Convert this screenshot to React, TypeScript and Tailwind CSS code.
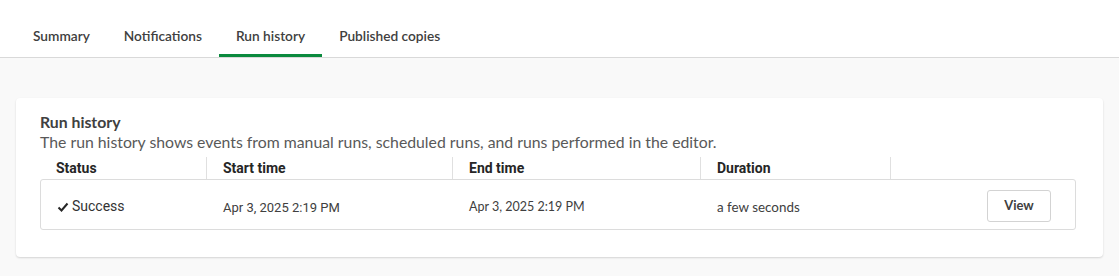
import React from "react";

const tabs = ["Summary", "Notifications", "Run history", "Published copies"];

export default function App() {
  return (
    <div className="w-[1119px] h-[276px] bg-[#f9f9f9] overflow-hidden" style={{ fontFamily: "Lato, 'Noto Sans', sans-serif" }}>
      <div className="bg-white h-[58px] border-b border-[#d9d9d9] flex items-end pl-4">
        {tabs.map((t) => {
          const active = t === "Run history";
          return (
            <div
              key={t}
              className={`px-[17px] h-[41px] flex items-start pt-[10px] text-[13.7px] font-semibold text-[#404040] border-b-[3px] ${active ? "border-[#0b8a3e]" : "border-transparent"}`}
            >
              {t}
            </div>
          );
        })}
      </div>
      <div className="px-4 pt-10">
        <div className="bg-white rounded-[4px] shadow-[0_1px_2px_rgba(0,0,0,0.15)] pl-6 pr-[27px] pt-[14px] pb-[27px]">
          <div className="text-[15.8px] font-bold text-[#404040] leading-5">Run history</div>
          <div className="text-[15.8px] text-[#595959] leading-5">
            The run history shows events from manual runs, scheduled runs, and runs performed in the editor.
          </div>
          <div className="mt-[5px] flex text-[14px] font-bold text-[#262626] h-[22px] items-center" style={{ fontFamily: "Roboto, sans-serif" }}>
            <div className="w-[167px] pl-4 h-full flex items-center border-r border-[#e0e0e0]">Status</div>
            <div className="w-[246px] pl-4 h-full flex items-center border-r border-[#e0e0e0]">Start time</div>
            <div className="w-[248px] pl-4 h-full flex items-center border-r border-[#e0e0e0]">End time</div>
            <div className="w-[190px] pl-4 h-full flex items-center border-r border-[#e0e0e0]">Duration</div>
          </div>
          <div className="h-[51px] border border-[#dcdcdc] rounded-[3px] flex items-center text-[13px] text-[#404040]" style={{ fontFamily: "Roboto, sans-serif" }}>
            <div className="w-[166px] pl-4 pt-[3px] flex items-center gap-[3px] text-[14px] text-[#333]">
              <svg width="12" height="12" viewBox="0 0 12 12" className="mt-[1px]">
                <path d="M1.5 6.5 L4.5 9.5 L10.5 2.5" fill="none" stroke="#262626" strokeWidth="2" />
              </svg>
              Success
            </div>
            <div className="w-[246px] pl-4 pt-[6px]">Apr 3, 2025 2:19 PM</div>
            <div className="w-[248px] pl-4 pt-[6px] text-[12.5px]" style={{ fontFamily: "Lato, sans-serif" }}>Apr 3, 2025 2:19 PM</div>
            <div className="w-[190px] pl-4 pt-[6px] text-[13.4px]" style={{ fontFamily: "Lato, sans-serif" }}>a few seconds</div>
            <div className="flex-1 flex justify-end pr-6 pt-[2px]">
              <button className="w-[64px] h-[32px] border border-[#d3d3d3] rounded-[3px] bg-white text-[13px] font-bold text-[#404040]" style={{ fontFamily: "Lato, sans-serif" }}>
                View
              </button>
            </div>
          </div>
        </div>
      </div>
    </div>
  );
}
